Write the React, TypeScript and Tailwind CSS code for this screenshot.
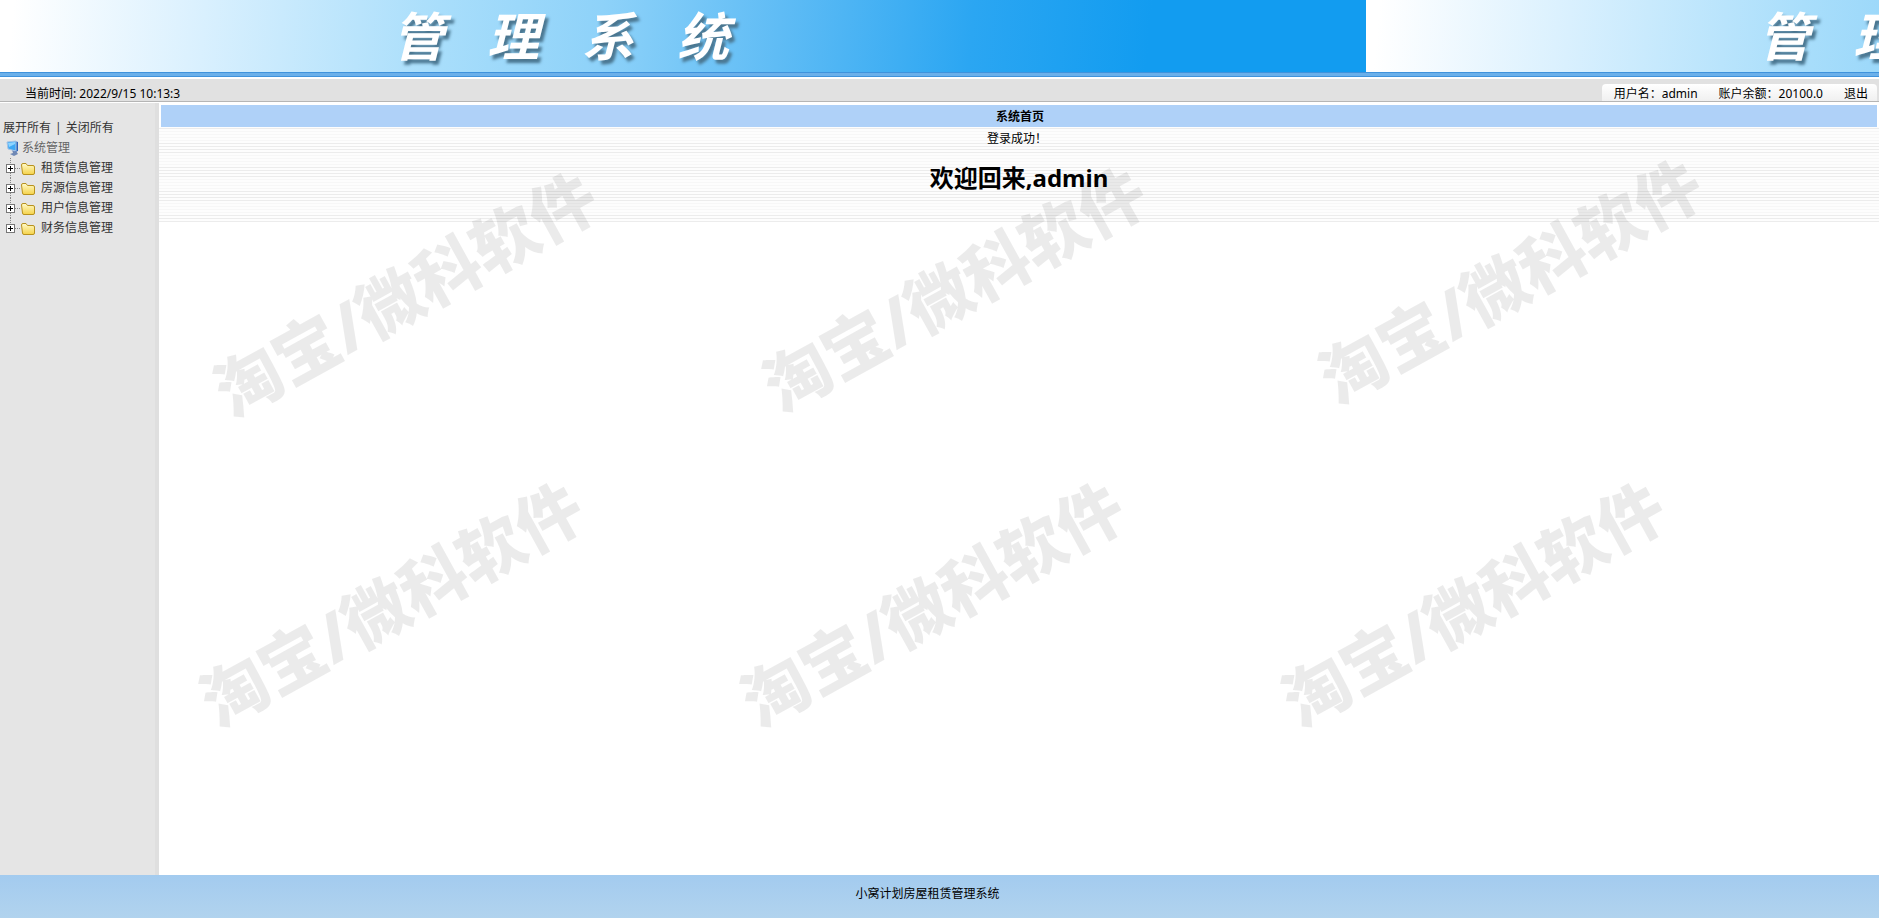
import type { ReactNode } from "react";

const groups = ["租赁信息管理", "房源信息管理", "用户信息管理", "财务信息管理"];

const watermarks = [
  "left-[405px] top-[293px]",
  "left-[954px] top-[288px]",
  "left-[1510px] top-[280px]",
  "left-[391px] top-[603px]",
  "left-[932px] top-[603px]",
  "left-[1473px] top-[603px]",
];

const BannerTile = ({ children }: { children: ReactNode }) => (
  <div className="flex h-[72px] w-[1366px] shrink-0 items-center gap-[43px] bg-[linear-gradient(95deg,#fff_1%,#d9f0fe_15%,#a9defb_32%,#8ed2f9_44%,#5fbcf5_57%,#2ba6f2_71%,#129cf0_84%)] pl-[392px] text-[52px] font-bold italic leading-none text-white [text-shadow:3px_4px_3px_#4a7690]">
    {children}
  </div>
);

const BannerTitle = () => (
  <>
    <span>管</span>
    <span>理</span>
    <span>系</span>
    <span>统</span>
  </>
);

const ComputerIcon = () => (
  <svg width="14" height="16" viewBox="0 0 14 16" aria-hidden="true">
    <path d="M6 10 L10 11 L12 14 L8 16 L4 14 L7 13 Z" fill="#6f88b4" />
    <path d="M9 1 L12 2 L12 11 L9 12 Z" fill="#2d62b8" />
    <path d="M1 2 L10 1 L10 11 L2 9 Z" fill="#3fa9f5" stroke="#a9c4e4" />
    <path d="M2 3 L9 2 L9 4 L3 7 Z" fill="#8fd4ff" />
  </svg>
);

const FolderIcon = () => (
  <svg width="15" height="13" viewBox="0 0 15 13" aria-hidden="true">
    <defs>
      <linearGradient id="folder" x1="0" y1="0" x2="0" y2="1">
        <stop offset="0" stopColor="#fffbcb" />
        <stop offset="1" stopColor="#f5d248" />
      </linearGradient>
    </defs>
    <path
      d="M.5 3 Q.5 1.500 2 1.500 H5 L6.500 3.500 H12 Q13.500 3.500 13.500 5 V11 Q13.500 12.500 12 12.500 H3 Q1.500 12.500 1.500 11 Z"
      fill="url(#folder)"
      stroke="#b8921e"
    />
  </svg>
);

const PlusBox = ({ last }: { last: boolean }) => (
  <svg width="16" height="20" viewBox="0 0 16 20" aria-hidden="true">
    <path d={last ? "M5.500 0 V6" : "M5.500 0 V6 M5.500 15 V20"} stroke="#888" strokeDasharray="1 1" />
    <path d="M10 10.500 H16" stroke="#888" strokeDasharray="1 1" />
    <rect x="1.500" y="6.500" width="8" height="8" fill="#fff" stroke="#777" />
    <path d="M3 10.500 H8 M5.500 8 V13" stroke="#000" />
  </svg>
);

const Sidebar = () => (
  <nav className="w-[159px] shrink-0 border-r-4 border-[#dfdfdf] bg-[#e5e5e5] pt-[15px] text-[#333]">
    <div className="flex h-5 items-center gap-1 pl-[3px]">
      <a href="#open">展开所有</a>
      <span>|</span>
      <a href="#close">关闭所有</a>
    </div>
    <div className="flex h-5 items-center gap-[2px] pl-[6px] text-[#666]">
      <ComputerIcon />
      系统管理
    </div>
    <ul>
      {groups.map((name, i) => (
        <li key={name}>
          <a href="#group" className="flex h-5 items-center pl-[5px]">
            <PlusBox last={i === groups.length - 1} />
            <FolderIcon />
            <span className="pl-[5px]">{name}</span>
          </a>
        </li>
      ))}
    </ul>
  </nav>
);

export default function App() {
  return (
    <div className="relative flex min-h-screen flex-col overflow-hidden bg-white font-['Noto_Sans','Noto_Sans_CJK_SC',sans-serif] text-xs text-black">
      <header>
        <div className="flex overflow-hidden">
          <BannerTile>
            <BannerTitle />
          </BannerTile>
          <BannerTile>
            <BannerTitle />
          </BannerTile>
        </div>
        <div className="h-[5px] border-y border-[#3f93dc] bg-[#6bb0ea]" />
        <div className="mt-[2px] flex h-[23px] items-end justify-between border-b border-[#b5b5b5] bg-[#e1e1e1] pl-[25px] pr-[2px]">
          <span className="leading-[14px]">当前时间: 2022/9/15 10:13:3</span>
          <div className="flex h-[17px] items-center gap-[21px] rounded-t bg-linear-to-b from-white to-[#f0f0f0] pl-3 pr-[9px] pt-[2px]">
            <span>用户名：admin</span>
            <span>账户余额：20100.0</span>
            <a href="#logout">退出</a>
          </div>
        </div>
      </header>

      <div className="mt-px flex grow">
        <Sidebar />
        <main className="min-w-0 grow pt-[2px] text-center">
          <h2 className="mx-[2px] h-[22px] bg-[#afd1f8] pl-[2px] font-bold leading-6">系统首页</h2>
          {/* ruled paper: faint line every 3px, four darker ones per 24px */}
          <div className="h-[95px] bg-[repeating-linear-gradient(to_bottom,transparent_0_1px,#ececec_1px_2px,transparent_2px_16px,#ececec_16px_17px,transparent_17px_19px,#ececec_19px_20px,transparent_20px_22px,#ececec_22px_23px,transparent_23px_24px),repeating-linear-gradient(to_bottom,#fdfdfd_0_1px,#f7f7f7_1px_2px,#fdfdfd_2px_3px)]">
            <p className="pr-1 pt-[2px] leading-5">登录成功！</p>
            <h1 className="pt-[10px] text-2xl font-bold leading-[38px]">欢迎回来,admin</h1>
          </div>
        </main>
      </div>

      <footer className="h-[43px] bg-linear-to-b from-[#a3cbef] to-[#b1d3ee] pr-6 pt-[9px] text-center leading-5">
        小窝计划房屋租赁管理系统
      </footer>

      <div className="pointer-events-none" aria-hidden="true">
        {watermarks.map((place) => (
          <span
            key={place}
            className={`absolute -translate-x-1/2 -translate-y-1/2 -rotate-[29deg] whitespace-nowrap text-[66px] font-black leading-none text-black/8 ${place}`}
          >
            淘宝/微科软件
          </span>
        ))}
      </div>
    </div>
  );
}
